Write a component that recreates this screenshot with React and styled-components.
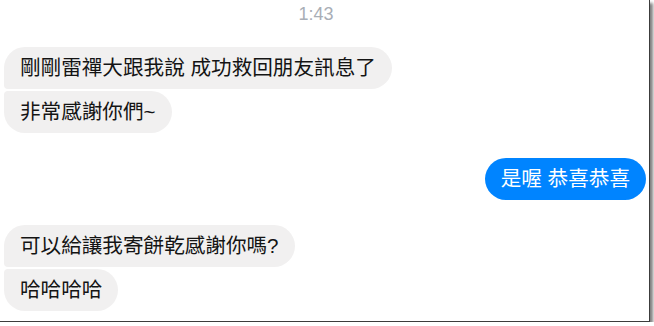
import React from "react";
import styled, { createGlobalStyle } from "styled-components";

const Global = createGlobalStyle`
  html, body { margin: 0; padding: 0; background: #ffffff; }
  body { font-family: "Liberation Sans", "Noto Sans CJK TC", sans-serif; }
`;

const Frame = styled.div`
  box-sizing: border-box;
  width: 650px;
  height: 322px;
  background: #ffffff;
  border-right: 1px solid #3c3c3c;
  border-bottom: 1px solid #3c3c3c;
  box-shadow: 3px 3px 3px rgba(0, 0, 0, 0.5);
  padding: 4px 3px 0 4px;
  display: flex;
  flex-direction: column;
  overflow: hidden;
`;

const TimeRow = styled.div`
  display: flex;
  justify-content: center;
  padding-right: 18px;
  height: 22px;
  line-height: 20px;
  font-size: 18px;
  color: #a9aeb6;
  font-family: "Liberation Sans", Arial, sans-serif;
`;

const Group = styled.div`
  display: flex;
  flex-direction: column;
  align-items: ${(p) => (p.$mine ? "flex-end" : "flex-start")};
  gap: 2px;
  margin-top: ${(p) => p.$top}px;
`;

const Bubble = styled.div`
  box-sizing: border-box;
  height: 42px;
  padding: 7px 16px 7px 16px;
  line-height: 28px;
  font-size: 20.6px;
  white-space: nowrap;
  font-family: "Liberation Sans", "Noto Sans CJK TC", sans-serif;
  background: ${(p) => (p.$mine ? "#0084ff" : "#f1f0f0")};
  color: ${(p) => (p.$mine ? "#ffffff" : "#141414")};
  border-radius: ${(p) =>
    p.$pos === "first"
      ? "21px 21px 21px 4px"
      : p.$pos === "last"
      ? "4px 21px 21px 21px"
      : "21px"};
`;

const groups = [
  { top: 21, mine: false, msgs: ["剛剛雷禪大跟我說 成功救回朋友訊息了", "非常感謝你們~"] },
  { top: 25, mine: true, msgs: ["是喔 恭喜恭喜"] },
  { top: 25, mine: false, msgs: ["可以給讓我寄餅乾感謝你嗎?", "哈哈哈哈"] },
];

export default function App() {
  return (
    <>
      <Global />
      <Frame>
        <TimeRow>1:43</TimeRow>
        {groups.map((g, gi) => (
          <Group key={gi} $mine={g.mine} $top={g.top}>
            {g.msgs.map((m, i) => {
              const pos =
                g.msgs.length === 1 ? "single" : i === 0 ? "first" : i === g.msgs.length - 1 ? "last" : "mid";
              return (
                <Bubble key={i} $mine={g.mine} $pos={pos}>
                  {m}
                </Bubble>
              );
            })}
          </Group>
        ))}
      </Frame>
    </>
  );
}
